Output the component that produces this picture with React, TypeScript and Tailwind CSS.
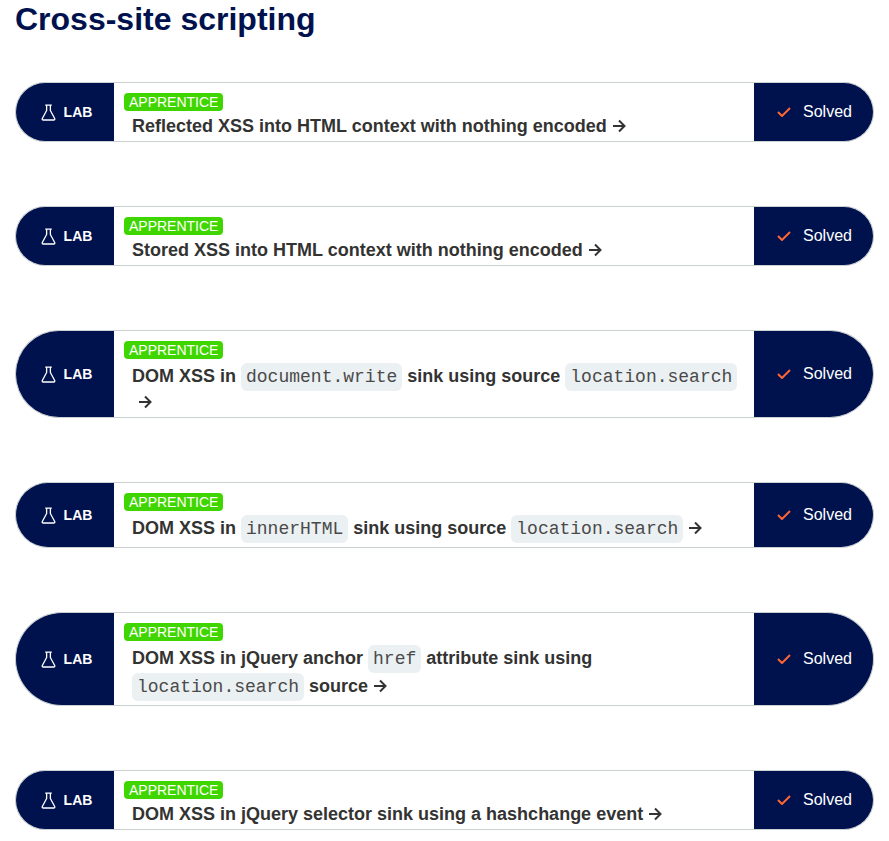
import React from "react";

const Code = ({ children }: { children: React.ReactNode }) => (
  <code className="inline-block rounded-[6px] bg-[#ebf0f2] px-[5px] font-['Liberation_Mono',monospace] text-[18px] font-normal leading-[28px] text-[#4a4a4a]">
    {children}
  </code>
);

const Arrow = () => (
  <svg viewBox="0 0 14 14" className="inline-block h-[14px] w-[14px] align-[-1px]" fill="none" stroke="#333332" strokeWidth="2">
    <path d="M1 7h11.5M7 1.5l5.5 5.5-5.5 5.5" />
  </svg>
);

const Flask = () => (
  <svg viewBox="0 0 16 18" className="h-[17px] w-[15px]" fill="none" stroke="#ffffff" strokeWidth="1.4" strokeLinejoin="round">
    <path d="M4.5 1.2h7M6 1.2v5.6L1.4 15.4c-.4.8.1 1.6 1 1.6h11.2c.9 0 1.4-.8 1-1.6L10 6.8V1.2" />
  </svg>
);

const Check = () => (
  <svg viewBox="0 0 14 10" className="h-[10px] w-[14px]" fill="none" stroke="#ff6633" strokeWidth="2">
    <path d="M1 5l4 4 8-8" />
  </svg>
);

const Row = ({ children }: { children: React.ReactNode }) => (
  <div className="flex items-stretch">
    <div className="flex w-[99px] shrink-0 items-center justify-center gap-[8px] rounded-l-[50px] border-y border-l border-[#cbd0d1] bg-[#00124e] pl-[3px] text-[14px] font-bold text-white">
      <Flask />
      <span>LAB</span>
    </div>
    <div className="min-w-0 flex-1 border-y border-[#cbd0d1] pb-[4px] pl-[10px] pr-[14px] pt-[10px]">
      <span className="mb-[4px] block h-[18px] w-fit rounded-[4px] bg-[#3fd600] px-[5px] text-[14px] font-normal leading-[18px] text-white">
        APPRENTICE
      </span>
      <p className="pl-[8px] text-[18px] font-bold leading-[22px] text-[#333332]">{children}</p>
    </div>
    <div className="flex w-[120px] shrink-0 items-center gap-[12px] rounded-r-[50px] border-y border-r border-[#cbd0d1] bg-[#00124e] pl-[23px] text-[16px] text-white">
      <Check />
      <span>Solved</span>
    </div>
  </div>
);

export default function App() {
  return (
    <div className="h-[841px] overflow-hidden bg-white px-[15px] font-['Liberation_Sans',Arial,sans-serif]">
      <h1 className="pb-[44px] pt-[1px] text-[32px] font-bold leading-[37px] text-[#00124e]">Cross-site scripting</h1>
      <div className="flex w-[859px] flex-col gap-[64px]">
        <Row>Reflected XSS into HTML context with nothing encoded <Arrow /></Row>
        <Row>Stored XSS into HTML context with nothing encoded <Arrow /></Row>
        <Row>
          DOM XSS in <Code>document.write</Code> sink using source <Code>location.search</Code> <span className="ml-[6px]"><Arrow /></span>
        </Row>
        <Row>
          DOM XSS in <Code>innerHTML</Code> sink using source <Code>location.search</Code> <Arrow />
        </Row>
        <Row>
          DOM XSS in jQuery anchor <Code>href</Code> attribute sink using <Code>location.search</Code> source <Arrow />
        </Row>
        <Row>DOM XSS in jQuery selector sink using a hashchange event <Arrow /></Row>
      </div>
    </div>
  );
}
